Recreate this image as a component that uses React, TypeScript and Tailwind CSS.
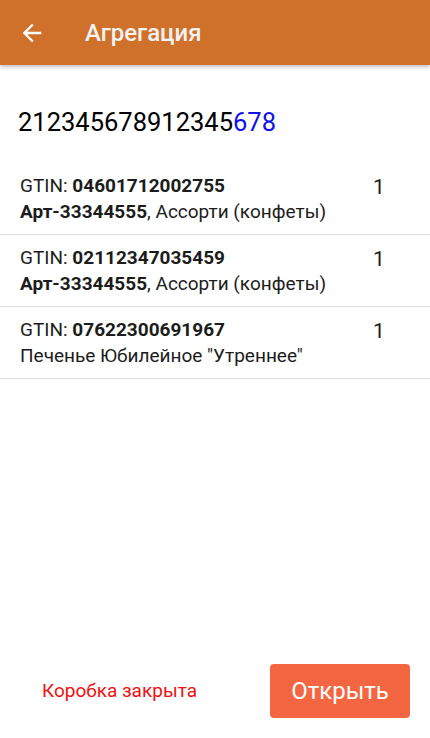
import React from "react";

const items = [
    { gtin: "04601712002755", art: "Арт-33344555", name: ", Ассорти (конфеты)", qty: 1 },
    { gtin: "02112347035459", art: "Арт-33344555", name: ", Ассорти (конфеты)", qty: 1 },
    { gtin: "07622300691967", art: "", name: "Печенье Юбилейное \"Утреннее\"", qty: 1 },
];

export default function App() {
    return (
        <div className="flex flex-col h-[738px] w-[430px] bg-white text-[#1c1c1c]" style={{ fontFamily: "Roboto, 'Noto Sans', sans-serif" }}>
            {/* шапка */}
            <div className="relative z-10 flex items-center h-[65px] bg-[#D0712B] shadow-[0_2px_4px_rgba(0,0,0,0.25)] shrink-0">
                <div className="w-[85px] flex items-center pl-[18px]">
                    <svg width="28" height="28" viewBox="0 0 24 24" fill="#ffffff">
                        <path d="M20 11H7.83l5.59-5.59L12 4l-8 8 8 8 1.41-1.41L7.83 13H20v-2z" />
                    </svg>
                </div>
                <span className="text-[24px] font-medium text-[#f3f3f3]">Агрегация</span>
            </div>

            {/* штрихкод */}
            <div className="px-[18px] pt-[40px] pb-[24px] text-[25.5px] leading-[34px] text-black">
                212345678912345<span className="text-[#1010ee]">678</span>
            </div>

            {/* список */}
            <div className="flex-1">
                {items.map((item, idx) => (
                    <div key={idx} className="flex border-b border-[#dedede] h-[72px] pl-[20px] pr-[18px] pt-[10px]">
                        <div className="flex-1 text-[19px] leading-[26px]">
                            <div>GTIN: <span className="font-bold">{item.gtin}</span></div>
                            <div>
                                {item.art && <span className="font-bold">{item.art}</span>}
                                {item.name}
                            </div>
                        </div>
                        <div className="w-[40px] text-[21px] leading-[28px] pl-[1px]">{item.qty}</div>
                    </div>
                ))}
            </div>

            {/* кнопки */}
            <div className="flex items-center pb-[20px] shrink-0">
                <span className="ml-[42px] text-[19px] text-[#f01010]">Коробка закрыта</span>
                <button className="ml-auto mr-[20px] w-[140px] h-[54px] rounded-[4px] bg-[#F46641] text-white text-[24px]">
                    Открыть
                </button>
            </div>
        </div>
    );
}
